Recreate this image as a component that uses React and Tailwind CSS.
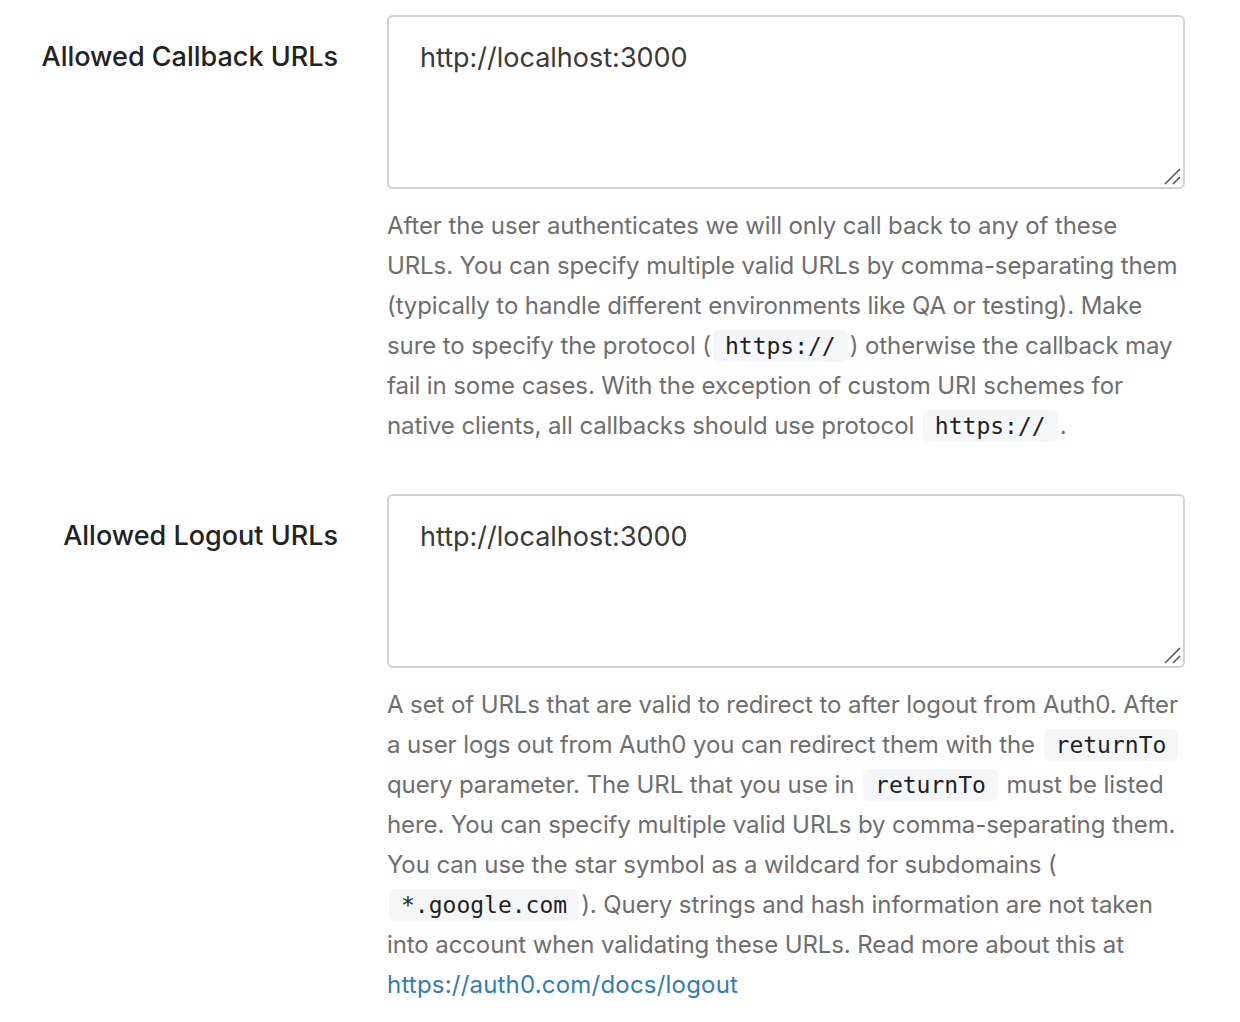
import React from "react";

const C = ({ children }) => (
  <code className="mx-[2px] rounded-[6px] bg-[#f5f6f8] px-[12px] py-[3px] font-['DejaVu_Sans_Mono',monospace] text-[23px] tracking-normal text-[#222]">
    {children}
  </code>
);

const L = ({ children }) => <div className="h-[40px]">{children}</div>;

function Row({ label, value, children }) {
  return (
    <div className="flex gap-[49px]">
      <div className="w-[338px] shrink-0 pt-[22px] text-right text-[27px] font-medium leading-[40px] tracking-normal text-[#222]">
        {label}
      </div>
      <div className="w-[798px] shrink-0">
        <div className="relative">
          <textarea
            defaultValue={value}
            className="block h-[174px] w-full resize-none rounded-[6px] border-2 border-[#d2d2d2] px-[31px] pt-[21px] text-[27px] leading-[40px] tracking-normal text-[#3a3a3a] outline-none"
          />
          <svg
            className="pointer-events-none absolute bottom-[2px] right-[2px]"
            width="20"
            height="20"
            viewBox="0 0 20 20"
          >
            <line x1="2" y1="17" x2="17" y2="2" stroke="#555" strokeWidth="1.6" />
            <line x1="10" y1="17" x2="17" y2="10" stroke="#555" strokeWidth="1.6" />
          </svg>
        </div>
        <div className="mt-[17px] whitespace-nowrap text-[24px] leading-[40px] text-[#6e6e6e]">
          {children}
        </div>
      </div>
    </div>
  );
}

export default function App() {
  return (
    <div className="min-h-[1022px] bg-white pt-[15px] font-['Inter',sans-serif] tracking-[-0.1px]">
      <div className="flex flex-col gap-[48px]">
        <Row label="Allowed Callback URLs" value="http://localhost:3000">
          <L>After the user authenticates we will only call back to any of these</L>
          <L>URLs. You can specify multiple valid URLs by comma-separating them</L>
          <L>(typically to handle different environments like QA or testing). Make</L>
          <L>
            sure to specify the protocol (<C>https://</C>) otherwise the callback may
          </L>
          <L>fail in some cases. With the exception of custom URI schemes for</L>
          <L>
            native clients, all callbacks should use protocol <C>https://</C>.
          </L>
        </Row>
        <Row label="Allowed Logout URLs" value="http://localhost:3000">
          <L>A set of URLs that are valid to redirect to after logout from Auth0. After</L>
          <L>
            a user logs out from Auth0 you can redirect them with the <C>returnTo</C>
          </L>
          <L>
            query parameter. The URL that you use in <C>returnTo</C> must be listed
          </L>
          <L>here. You can specify multiple valid URLs by comma-separating them.</L>
          <L>You can use the star symbol as a wildcard for subdomains (</L>
          <L>
            <C>*.google.com</C>). Query strings and hash information are not taken
          </L>
          <L>into account when validating these URLs. Read more about this at</L>
          <L>
            <a href="#" className="tracking-[0.2px] text-[#2f7fb0]">
              https://auth0.com/docs/logout
            </a>
          </L>
        </Row>
      </div>
    </div>
  );
}
